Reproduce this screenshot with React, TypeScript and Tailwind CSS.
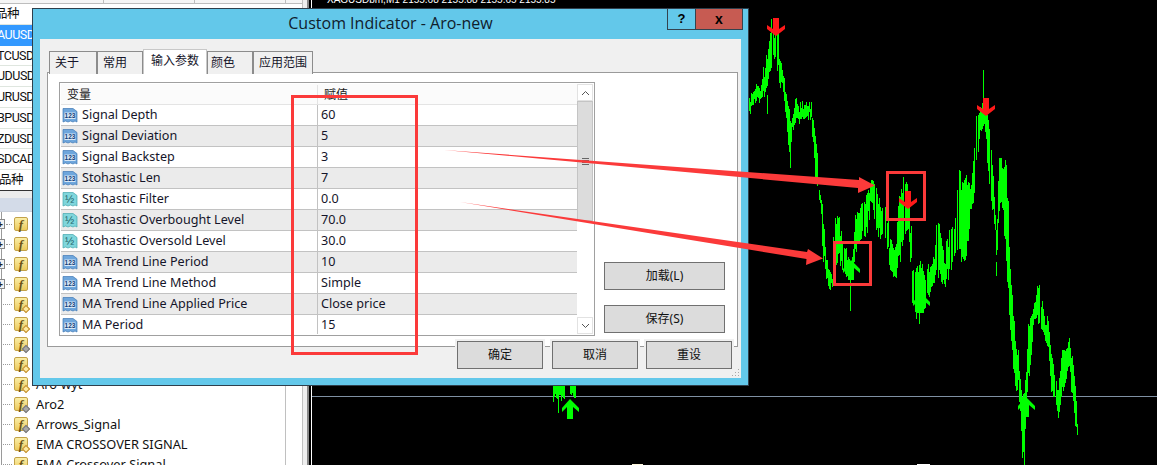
import { useMemo } from "react";

type Param = { name: string; value: string; kind: "int" | "dbl" };

const params: Param[] = [
  { name: "Signal Depth", value: "60", kind: "int" },
  { name: "Signal Deviation", value: "5", kind: "int" },
  { name: "Signal Backstep", value: "3", kind: "int" },
  { name: "Stohastic Len", value: "7", kind: "int" },
  { name: "Stohastic Filter", value: "0.0", kind: "dbl" },
  { name: "Stohastic Overbought Level", value: "70.0", kind: "dbl" },
  { name: "Stohastic Oversold Level", value: "30.0", kind: "dbl" },
  { name: "MA Trend Line Period", value: "10", kind: "int" },
  { name: "MA Trend Line Method", value: "Simple", kind: "int" },
  { name: "MA Trend Line Applied Price", value: "Close price", kind: "int" },
  { name: "MA Period", value: "15", kind: "int" },
];

const symbols = [
  { text: "品种", cls: "-ml-[5px]" },
  { text: "AUUSD", cls: "-ml-[3px]", active: true },
  { text: "TCUSD", cls: "-ml-[3px]" },
  { text: "UDUSD", cls: "-ml-[3px]" },
  { text: "URUSD", cls: "-ml-[3px]" },
  { text: "BPUSD", cls: "-ml-[3px]" },
  { text: "ZDUSD", cls: "-ml-[3px]" },
  { text: "SDCAD", cls: "-ml-[3px]" },
  { text: "易品种", cls: "-ml-[13px]" },
];

const tree: { label: string; plus?: boolean; badge?: "yellow" | "gray" }[] = [
  { label: "", plus: true },
  { label: "", plus: true },
  { label: "", plus: true },
  { label: "", plus: true },
  { label: "", badge: "yellow" },
  { label: "", badge: "yellow" },
  { label: "", badge: "gray" },
  { label: "", badge: "yellow" },
  { label: "Aro-wyt", badge: "yellow" },
  { label: "Aro2", badge: "gray" },
  { label: "Arrows_Signal", badge: "gray" },
  { label: "EMA CROSSOVER SIGNAL", badge: "yellow" },
  { label: "EMA Crossover Signal", badge: "yellow" },
];

// x, top, bottom of the price band, read off the chart
const band: [number, number, number][] = [
  [748, 100, 117], [752, 88, 108], [757, 85, 106], [762, 80, 100], [766, 55, 95],
  [769, 40, 78], [771, 16, 70], [774, 30, 60], [777, 16, 68], [779, 55, 85],
  [782, 65, 92], [785, 85, 115], [788, 100, 145], [790, 118, 172], [792, 120, 135],
  [795, 95, 125], [800, 105, 125], [805, 97, 120], [811, 100, 122], [813, 118, 145],
  [815, 135, 185], [818, 168, 190], [820, 190, 205], [823, 205, 255], [826, 258, 285],
  [829, 268, 292], [832, 270, 285], [834, 218, 275], [838, 212, 258], [842, 240, 270],
  [846, 250, 282], [850, 262, 282], [853, 245, 270], [855, 210, 255], [860, 205, 240],
  [866, 195, 240], [871, 175, 205], [875, 180, 235], [880, 205, 238], [886, 200, 240],
  [890, 240, 272], [895, 245, 280], [899, 195, 260], [904, 172, 240], [909, 190, 230],
  [912, 265, 300], [916, 265, 318], [921, 262, 312], [925, 270, 305], [930, 262, 298],
  [934, 258, 288], [937, 215, 275], [942, 240, 285], [944, 260, 290], [950, 222, 270],
  [955, 228, 260], [958, 156, 245], [962, 185, 262], [965, 168, 262], [970, 190, 218],
  [973, 160, 205], [976, 110, 160], [980, 105, 135], [983, 100, 130], [986, 105, 138],
  [990, 125, 198], [993, 175, 215], [997, 225, 262], [1000, 148, 205], [1003, 165, 215],
  [1006, 160, 265], [1010, 270, 335], [1013, 310, 370], [1016, 345, 395], [1018, 350, 385],
  [1020, 375, 415], [1023, 395, 465], [1026, 370, 412], [1029, 320, 375], [1033, 305, 330],
  [1037, 282, 318], [1040, 285, 330], [1044, 315, 340], [1048, 315, 350], [1052, 350, 395],
  [1055, 375, 405], [1058, 385, 422], [1062, 345, 395], [1066, 345, 385], [1069, 338, 370],
  [1072, 355, 400], [1075, 380, 428], [1077, 420, 442], [1078, 385, 410],
];

const spikes: [number, number, number][] = [
  [983, 70, 110], [850, 280, 311], [767, 95, 114], [766, 55, 80], [996, 262, 276],
  [919, 310, 324], [995, 215, 230], [1024, 440, 465], [558, 395, 413], [900, 240, 262],
];

function noise(n: number) {
  const s = Math.sin(n * 127.1) * 43758.5453;
  return s - Math.floor(s);
}

function buildCandles() {
  let d = "";
  for (let i = 0; i < band.length - 1; i++) {
    const [x0, t0, b0] = band[i];
    const [x1, t1, b1] = band[i + 1];
    for (let x = x0; x < x1; x++) {
      // wobble along the read-off points, so the band stays jagged
      const k = Math.min(1, Math.max(0, (x - x0) / (x1 - x0) + (noise(x + 0.2) - 0.5) * 0.5));
      const shift = (noise(x + 0.7) - 0.5) * 6;
      const top = t0 + (t1 - t0) * k + shift + noise(x) * 8;
      const bottom = b0 + (b1 - b0) * k + shift - noise(x + 0.5) * 8;
      if (noise(x + 0.9) < 0.05) continue;
      d += `M${x + 0.5} ${Math.round(top)}V${Math.round(Math.max(bottom, top + 8))}`;
    }
  }
  for (const [x, t, b] of spikes) d += `M${x + 0.5} ${t}V${b}`;
  // stub of the chart that shows under the dialog
  for (let x = 553; x < 565; x++) d += `M${x + 0.5} 385V${394 + Math.round(noise(x) * 8)}`;
  for (let x = 570; x < 576; x++) d += `M${x + 0.5} 385V${392 + Math.round(noise(x) * 8)}`;
  return d;
}

function upArrow(x: number, y: number) {
  // x is the tip, y the top of it
  return `M${x} ${y}L${x + 9} ${y + 9}V${y + 13}L${x + 3} ${y + 8}V${y + 20}H${x - 3}V${y + 8}L${x - 8} ${y + 13}V${y + 9}Z`;
}

function downArrow(x: number, y: number) {
  // x is the middle, y the top of the shaft
  return `M${x - 3} ${y}H${x + 3}V${y + 11}L${x + 9} ${y + 7}V${y + 11}L${x} ${y + 18}L${x - 9} ${y + 11}V${y + 7}L${x - 3} ${y + 11}Z`;
}

function Chart() {
  const candles = useMemo(buildCandles, []);
  return (
    <svg viewBox="312 0 845 465" className="block h-[465px] w-[845px]">
      <line x1="312" x2="1157" y1="396.5" y2="396.5" stroke="#7f90a3" />
      <path d={candles} stroke="#00ff00" fill="none" />
      <g fill="#00ff00">
        <path d={upArrow(570, 399)} />
        <path d={upArrow(851, 260)} />
        <path d={upArrow(921, 293)} />
        <path d={upArrow(1026, 397)} />
      </g>
      <g fill="#ff1a1a">
        <path d={downArrow(776, 18)} />
        <path d={downArrow(986, 98)} />
        <path d={downArrow(908, 191)} />
      </g>
      <rect x="632" y="464" width="11" height="1" fill="#fff8dc" />
      <rect x="917" y="464" width="13" height="1" fill="#ffffff" />
    </svg>
  );
}

function ParamIcon({ kind }: { kind: Param["kind"] }) {
  const fill = kind === "int" ? "#6ea6dc" : "#7fd6dc";
  const stroke = kind === "int" ? "#3f78b5" : "#45a6ad";
  return (
    <svg viewBox="0 0 16 16" className="h-4 w-4 shrink-0">
      <path
        d="M1 1.500H11L15 4.500V15L13 14L11 15L8.500 14L6 15L3.500 14L1 15Z"
        fill={fill}
        stroke={stroke}
        strokeWidth="0.7"
      />
      {kind === "int" ? (
        <>
          <rect x="2.500" y="5.500" width="11" height="6.500" fill="#d8e8f6" />
          <text x="8" y="11" textAnchor="middle" fontSize="6.500" fontWeight="700" fill="#123f7a" fontFamily="'Liberation Sans', sans-serif">
            123
          </text>
        </>
      ) : (
        <text x="7.500" y="12" textAnchor="middle" fontSize="11" fill="#1e5f66" fontFamily="'Liberation Sans', sans-serif">
          ½
        </text>
      )}
    </svg>
  );
}

function FuncIcon({ badge }: { badge?: "yellow" | "gray" }) {
  return (
    <div className="relative flex h-[14px] w-[14px] shrink-0 items-center justify-center rounded-[2px] border border-[#c2a24a] bg-linear-to-b from-[#fbeea6] to-[#eccb5c] font-['Liberation_Serif',serif] text-[13px] leading-none font-bold text-[#6b5416] italic">
      f
      {badge && (
        <span
          className={
            badge === "gray"
              ? "absolute -right-[2px] -bottom-[2px] h-[6px] w-[6px] rotate-45 border border-[#777777] bg-[#a8a8a8]"
              : "absolute -right-[2px] -bottom-[2px] h-[6px] w-[6px] rotate-45 border border-[#c08a2a] bg-[#fde9a0]"
          }
        />
      )}
    </div>
  );
}

function SymbolList() {
  return (
    <div className="flex h-[191px] shrink-0 flex-col overflow-hidden border-b border-[#333333]">
      <div className="grid h-1 shrink-0 grid-cols-[104px_91px_91px_1fr] border-b border-[#bdbdbd] bg-[#f5f5f5]">
        <div className="border-r border-[#bdbdbd]" />
        <div className="border-r border-[#bdbdbd]" />
        <div className="border-r border-[#bdbdbd]" />
      </div>
      {symbols.map((s) => (
        <div
          key={s.text}
          className={
            s.active
              ? "flex h-[20.750px] shrink-0 items-center overflow-hidden bg-[#3399ff] pt-px font-['Roboto','Noto_Sans_CJK_SC',sans-serif] text-[12.500px] tracking-[-0.5px] text-white"
              : "flex h-[20.750px] shrink-0 items-center overflow-hidden border-b border-[#dfe6df] pt-px font-['Roboto','Noto_Sans_CJK_SC',sans-serif] text-[12.500px] tracking-[-0.5px] text-[#111111]"
          }
        >
          <span className={s.cls + " whitespace-nowrap"}>{s.text}</span>
        </div>
      ))}
    </div>
  );
}

function Navigator() {
  return (
    <div className="flex min-h-0 flex-1 flex-col overflow-hidden">
      <div className="h-[7px] shrink-0 bg-[#ececec]" />
      <div className="h-[14px] shrink-0 border-b border-[#c9d0dc] bg-[#d3dbe8]" />
      <div className="ml-px min-h-0 w-[285px] flex-1 border-x border-[#c0c0c0] border-l-[#9a9a9a] border-l-dotted pt-[2px]">
        {tree.map((row, i) => (
          <div key={i} className="flex h-5 shrink-0 items-center">
            {row.plus ? (
              <>
                <div className="-ml-[7px] flex h-[10px] w-[10px] shrink-0 items-center justify-center border border-[#8a8a8a] bg-[#f3f3f3] text-[10px] leading-none font-bold text-[#222222]">
                  +
                </div>
                <div className="mr-[2px] ml-px w-[6px] border-t border-dotted border-[#9a9a9a]" />
              </>
            ) : (
              <div className="mr-[2px] ml-px w-[9px] border-t border-dotted border-[#9a9a9a]" />
            )}
            <FuncIcon badge={row.badge} />
            <span className="ml-2 pt-px text-[12.800px] whitespace-nowrap text-[#111111]">{row.label}</span>
          </div>
        ))}
      </div>
    </div>
  );
}

function ScrollBar() {
  return (
    <div className="flex w-4 shrink-0 flex-col">
      <div className="flex h-[17px] items-center justify-center border border-[#e2e2e2] bg-white">
        <svg viewBox="0 0 9 6" className="h-[6px] w-[9px]">
          <path d="M1 5L4.500 1.500L8 5" fill="none" stroke="#555555" />
        </svg>
      </div>
      <div className="flex h-[120px] items-center justify-center border border-[#c4c4c4] bg-[#dcdcdc]">
        <div className="h-[7px] w-[7px] border-y border-[#666666] bg-[linear-gradient(#dcdcdc_1px,#666666_1px,#666666_2px,#dcdcdc_2px)] bg-[length:100%_2px]" />
      </div>
      <div className="flex-1 bg-white" />
      <div className="flex h-[17px] items-center justify-center border border-[#e2e2e2] bg-white">
        <svg viewBox="0 0 9 6" className="h-[6px] w-[9px]">
          <path d="M1 1L4.500 4.500L8 1" fill="none" stroke="#555555" />
        </svg>
      </div>
    </div>
  );
}

function ParamTable() {
  return (
    <div className="flex h-[254px] w-[536px] overflow-hidden border border-[#a0a0a0] p-px">
      <div className="w-[516px] shrink-0 overflow-hidden">
        <div className="grid h-[21px] grid-cols-[257px_1fr] border-b border-[#e4e4e4] bg-[#fbfbfb] pt-px text-[12px] leading-[20px] text-[#1a1a1a]">
          <div className="border-r border-[#e4e4e4] pl-[6px]">变量</div>
          <div className="pl-[6px]">赋值</div>
        </div>
        {params.map((p, i) => (
          <div
            key={p.name}
            className={
              i % 2 === 0
                ? "grid h-[21px] grid-cols-[257px_1fr] border-b border-[#c2c2c2] bg-white text-[12.600px]"
                : "grid h-[21px] grid-cols-[257px_1fr] border-b border-[#c2c2c2] bg-[#ebebeb] text-[12.600px]"
            }
          >
            <div className="flex items-center gap-1 border-r border-[#c2c2c2] pl-px">
              <ParamIcon kind={p.kind} />
              <span className="pt-px whitespace-nowrap">{p.name}</span>
            </div>
            <div className="flex items-center pt-px pl-[3px]">{p.value}</div>
          </div>
        ))}
      </div>
      <ScrollBar />
    </div>
  );
}

const btn =
  "flex h-7 items-center justify-center border border-[#707070] bg-[#dcdcdc] text-[12px] text-[#111111]";

const tab =
  "-mb-px flex h-[23px] items-center border border-b-0 border-[#8c8c8c] bg-[#f0f0f0]";

function Dialog() {
  return (
    <div className="absolute top-2 left-8 flex h-[378px] w-[717px] flex-col border border-[#2f3f4c] bg-[#63c8ea] font-['Noto_Sans','Noto_Sans_CJK_SC',sans-serif] text-[12px] text-[#15152a]">
      <div className="relative flex h-[30px] shrink-0 items-center justify-center">
        <span className="-mt-[2px] font-['Open_Sans',sans-serif] text-[16px] text-[#10202c]">Custom Indicator - Aro-new</span>
        <div className="absolute top-0 right-[5px] flex h-[21px] border-x border-b border-[#33434f]">
          <div className="flex w-[28px] items-center justify-center border-r border-[#33434f] font-['Liberation_Sans',sans-serif] text-[13px] font-bold text-black">
            ?
          </div>
          <div className="flex w-[46px] items-center justify-center bg-[#c75b52] font-['Liberation_Sans',sans-serif] text-[14px] font-bold text-black">
            x
          </div>
        </div>
      </div>

      <div className="relative mx-[7px] h-[339px] w-[701px] bg-[#f0f0f0]">
        <div className="mt-[9px] flex h-[25px] items-end pl-[9px]">
          <div className={tab + " w-[48px] pl-[5px]"}>关于</div>
          <div className={tab + " w-[46px] pl-[5px]"}>常用</div>
          <div className="relative z-10 -mb-px flex h-[25px] w-[64px] items-center justify-center border border-b-0 border-[#c8c8c8] bg-white pb-[2px]">输入参数</div>
          <div className={tab + " w-[46px] pl-[3px]"}>颜色</div>
          <div className={tab + " w-[60px] pl-[5px]"}>应用范围</div>
        </div>

        <div className="-mt-px ml-[7px] flex h-[275px] w-[691px] border border-[#9a9a9a] bg-white pt-[9px] pl-[11px]">
          <ParamTable />
          <div className="ml-[9px] flex w-[121px] flex-col gap-[15px] pt-[180px]">
            <div className={btn}>加载(L)</div>
            <div className={btn}>保存(S)</div>
          </div>
        </div>

        <div className="relative -mt-[6px] flex justify-end pr-[9px]">
          <div className={btn + " w-[86px] border-[#2f79b5] ring-2 ring-[#f0f0f0]"}>确定</div>
          <div className={btn + " ml-[9px] w-[86px] ring-2 ring-[#f0f0f0]"}>取消</div>
          <div className={btn + " ml-[8px] w-[86px] ring-2 ring-[#f0f0f0]"}>重设</div>
        </div>

        <svg viewBox="0 0 9 9" className="absolute right-px bottom-px h-[9px] w-[9px]">
          <path d="M7 1h1v1H7zM4 4h1v1H4zM7 4h1v1H7zM1 7h1v1H1zM4 7h1v1H4zM7 7h1v1H7z" fill="#a8a8a8" />
        </svg>
      </div>
    </div>
  );
}

function Annotations() {
  return (
    <>
      <div className="absolute top-[95px] left-[291px] h-[260px] w-[127px] border-[3px] border-[#fb3a3a]" />
      <div className="absolute top-[171px] left-[886px] h-[50px] w-[40px] border-[3px] border-[#fb3a3a]" />
      <div className="absolute top-[241px] left-[833px] h-[45px] w-[39px] border-[3px] border-[#fb3a3a]" />
      <svg viewBox="0 0 1157 465" className="pointer-events-none absolute inset-0 h-[465px] w-[1157px]">
        <g fill="#fb3a3a">
          <path d="M444 150L859 180L859 177L875 185.500L858 193L858 188Z" />
          <path d="M460 202L807 252L808 249L823 258.500L806 265L806.500 259Z" />
        </g>
      </svg>
    </>
  );
}

export default function App() {
  return (
    <div className="relative flex h-[465px] w-[1157px] overflow-hidden bg-black font-['Noto_Sans','Noto_Sans_CJK_SC',sans-serif]">
      <div className="flex h-full w-[309px] shrink-0 bg-white">
        <div className="flex w-[302px] flex-col">
          <SymbolList />
          <Navigator />
        </div>
        <div className="w-[5px] border-l border-[#c0c0c0] bg-[#eeeeee]" />
        <div className="w-[2px] bg-[#888888]" />
      </div>
      <div className="relative ml-[2px] border-l border-white">
        <Chart />
        <div className="absolute -top-[8px] left-[15px] font-['Liberation_Sans',sans-serif] text-[10px] whitespace-nowrap text-white">
          XAGUSDbm,M1 2155.68 2155.88 2155.65 2155.85
        </div>
      </div>
      <Dialog />
      <Annotations />
    </div>
  );
}
